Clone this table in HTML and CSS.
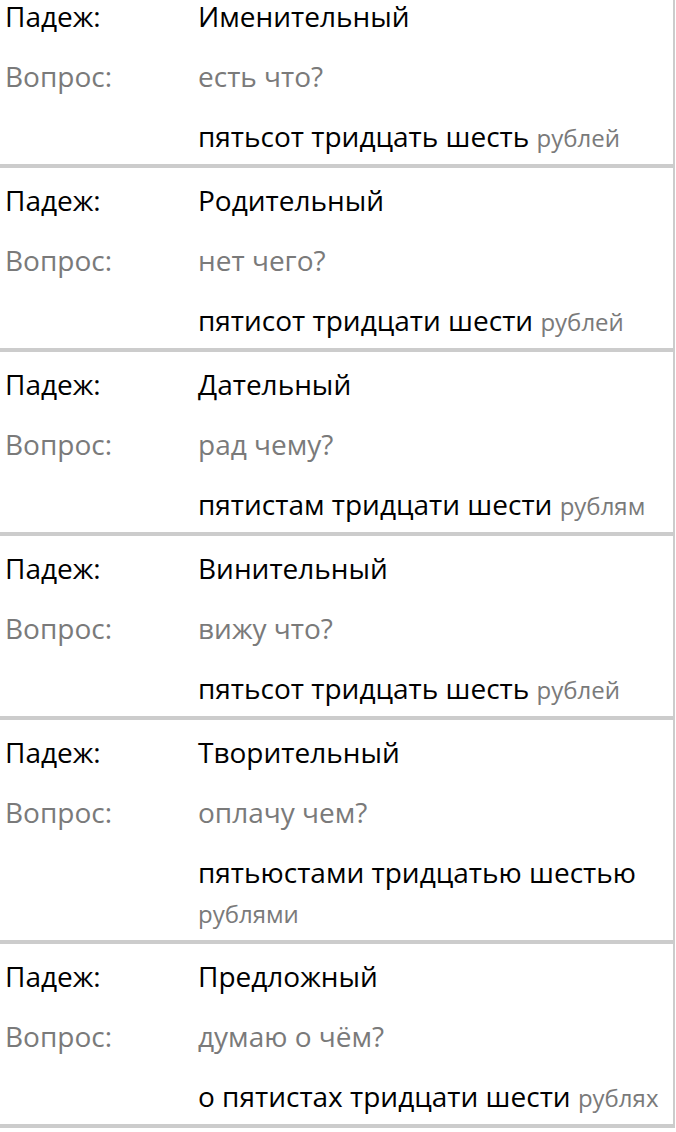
FILE: index.html
```html
<!DOCTYPE html>
<html lang="ru">
<head>
<meta charset="utf-8">
<link rel="stylesheet" href="styles.css">
</head>
<body>
<div class="list">
  <div class="card card-first">
    <div class="row"><span class="label">Падеж:</span><span class="value">Именительный</span></div>
    <div class="row"><span class="label muted">Вопрос:</span><span class="value muted">есть что?</span></div>
    <div class="row"><span class="label"></span><span class="value">пятьсот тридцать шесть <span class="unit">рублей</span></span></div>
  </div>
  <div class="card">
    <div class="row"><span class="label">Падеж:</span><span class="value">Родительный</span></div>
    <div class="row"><span class="label muted">Вопрос:</span><span class="value muted">нет чего?</span></div>
    <div class="row"><span class="label"></span><span class="value">пятисот тридцати шести <span class="unit">рублей</span></span></div>
  </div>
  <div class="card">
    <div class="row"><span class="label">Падеж:</span><span class="value">Дательный</span></div>
    <div class="row"><span class="label muted">Вопрос:</span><span class="value muted">рад чему?</span></div>
    <div class="row"><span class="label"></span><span class="value">пятистам тридцати шести <span class="unit">рублям</span></span></div>
  </div>
  <div class="card">
    <div class="row"><span class="label">Падеж:</span><span class="value">Винительный</span></div>
    <div class="row"><span class="label muted">Вопрос:</span><span class="value muted">вижу что?</span></div>
    <div class="row"><span class="label"></span><span class="value">пятьсот тридцать шесть <span class="unit">рублей</span></span></div>
  </div>
  <div class="card">
    <div class="row"><span class="label">Падеж:</span><span class="value">Творительный</span></div>
    <div class="row"><span class="label muted">Вопрос:</span><span class="value muted">оплачу чем?</span></div>
    <div class="row"><span class="label"></span><span class="value">пятьюстами тридцатью шестью <span class="unit">рублями</span></span></div>
  </div>
  <div class="card">
    <div class="row"><span class="label">Падеж:</span><span class="value">Предложный</span></div>
    <div class="row"><span class="label muted">Вопрос:</span><span class="value muted">думаю о чём?</span></div>
    <div class="row"><span class="label"></span><span class="value">о пятистах тридцати шести <span class="unit">рублях</span></span></div>
  </div>
</div>
</body>
</html>
```

FILE: styles.css
```css
html, body {
  margin: 0;
  padding: 0;
  background: #ffffff;
}
body {
  font-family: "Open Sans", "Noto Sans", sans-serif;
  color: #000000;
  overflow: hidden;
}
.list {
  width: 675px;
}
.card {
  display: flex;
  flex-direction: column;
  gap: 20px;
  padding: 12px 0 8px 5px;
  border-right: 2px solid #cccccc;
  border-bottom: 4px solid #cccccc;
}
.card-first {
  padding-top: 0;
}
.card-first .row:first-child {
  line-height: 32px;
  margin-bottom: 4px;
}
.row {
  display: grid;
  grid-template-columns: 193px 1fr;
  font-size: 28px;
  line-height: 40px;
}
.muted {
  color: #7a7a7a;
}
.value {
  padding-right: 8px;
}
.unit {
  font-size: 24px;
  line-height: 1;
  color: #7a7a7a;
}
```
